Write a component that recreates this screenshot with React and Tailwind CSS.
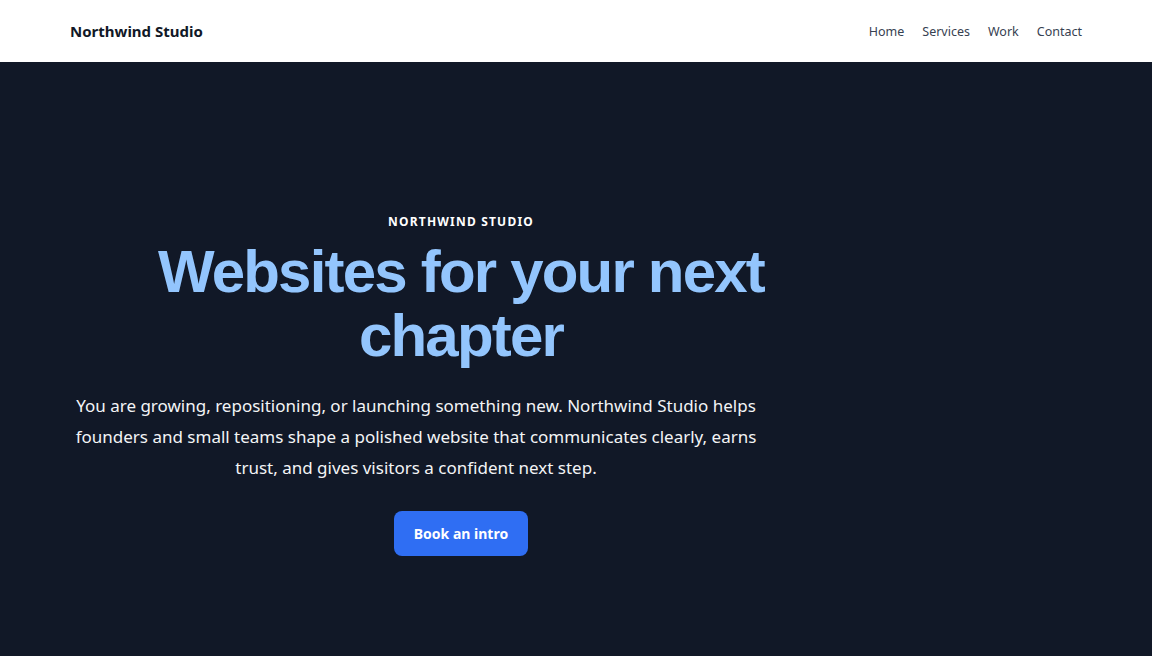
export default function App() {
  return (
    <div className="min-h-[656px] flex flex-col bg-[#111827]" style={{ fontFamily: '"Noto Sans", "Open Sans", sans-serif' }}>
      {/* Header */}
      <header className="bg-white h-[62px] flex items-center">
        <div className="w-full px-[70px] flex items-center justify-between">
          <div className="text-[15px] font-bold text-[#111827]">Northwind Studio</div>
          <nav className="flex items-center gap-[18px] pt-[2px] text-[12.5px] text-[#374151]">
            <a href="#">Home</a>
            <a href="#">Services</a>
            <a href="#">Work</a>
            <a href="#">Contact</a>
          </nav>
        </div>
      </header>

      {/* Hero */}
      <main className="flex-1 px-[70px] pt-[151px]">
        <div className="w-[782px] flex flex-col items-center">
          <p className="text-[12px] font-bold tracking-[0.1em] text-white uppercase">Northwind Studio</p>
          <h1
            className="mt-[9px] text-[60px] font-bold leading-[64px] tracking-[-0.03em] text-[#93c5fd] text-center"
            style={{ fontFamily: '"Liberation Sans", Arial, sans-serif' }}
          >
            Websites for your next
            <br />
            chapter
          </h1>
          <p className="self-start mt-[22px] w-[692px] text-center text-[17px] leading-[31px] text-[#f3f4f6]">
            You are growing, repositioning, or launching something new. Northwind Studio helps founders and small teams shape a polished website that communicates clearly, earns trust, and gives visitors a confident next step.
          </p>
          <button className="mt-[28px] h-[45px] px-[20px] rounded-lg bg-[#2f6ef3] text-white text-[14px] font-bold">
            Book an intro
          </button>
        </div>
      </main>
    </div>
  )
}
